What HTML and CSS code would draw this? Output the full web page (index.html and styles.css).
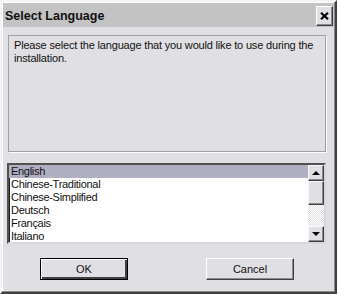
FILE: index.html
```html
<!DOCTYPE html>
<html lang="en">
<head>
    <meta charset="UTF-8">
    <title>Select Language</title>
    <link rel="stylesheet" href="styles.css">
</head>
<body>
    <div class="window">
        <div class="title-bar">
            <span class="title">Select Language</span>
            <button class="close-btn" aria-label="Close">
                <svg width="9" height="8" viewBox="0 0 9 8"><path d="M1 0.8 L8 7.2 M8 0.8 L1 7.2" stroke="#000" stroke-width="2.2" fill="none"/></svg>
            </button>
        </div>

        <div class="content">
            <div class="message">
                Please select the language that you would like to use during the installation.
            </div>

            <div class="list-box">
                <ul class="items">
                    <li class="selected">English</li>
                    <li>Chinese-Traditional</li>
                    <li>Chinese-Simplified</li>
                    <li>Deutsch</li>
                    <li>Français</li>
                    <li>Italiano</li>
                </ul>
                <div class="scrollbar">
                    <div class="sb-btn"><span class="arrow-up"></span></div>
                    <div class="sb-thumb"></div>
                    <div class="sb-track"></div>
                    <div class="sb-btn"><span class="arrow-down"></span></div>
                </div>
            </div>

            <div class="buttons">
                <button class="btn default">OK</button>
                <button class="btn">Cancel</button>
            </div>
        </div>
    </div>
</body>
</html>
```

FILE: styles.css
```css
body {
    margin: 0;
    font-family: 'Liberation Sans', Arial, sans-serif;
    background-color: #e0dfe3;
}
.window {
    width: 337px;
    height: 294px;
    box-sizing: border-box;
    background-color: #e0dfe3;
    border: 2px solid;
    border-color: #f4f4f4 #404040 #404040 #f4f4f4;
    box-shadow: inset -1px -1px #8a8a8a, inset 1px 1px #ffffff;
    display: flex;
    flex-direction: column;
}
.title-bar {
    margin: 1px 1px 0 1px;
    height: 24px;
    background-color: #c3c3c3;
    display: flex;
    align-items: center;
    justify-content: space-between;
    padding: 0 1px 0 2px;
}
.title {
    font-weight: 700;
    font-size: 12.5px;
    color: #111;
    padding-top: 1px;
}
.close-btn {
    width: 17px;
    height: 20px;
    padding: 0;
    margin-top: 1px;
    background-color: #e0dfe3;
    border: 1px solid;
    border-color: #ffffff #404040 #404040 #ffffff;
    box-shadow: inset -1px -1px #8a8a8a;
    display: flex;
    align-items: center;
    justify-content: center;
}
.content {
    padding: 8px 9px 0 6px;
}
.message {
    height: 112px;
    border: 1px solid #a0a0a0;
    box-shadow: 1px 1px 0 #fbfbfb;
    padding: 3px 5px 0 5px;
    font-size: 11px;
    letter-spacing: -0.18px;
    line-height: 13px;
    color: #111;
}
.list-box {
    margin: 11px 0 0 -1px;
    height: 81px;
    box-sizing: border-box;
    border: 2px solid;
    border-color: #505050 #d8d8d8 #d8d8d8 #505050;
    box-shadow: inset 1px 1px #202020;
    background-color: #ffffff;
    display: flex;
}
.items {
    list-style: none;
    margin: 0;
    padding: 0;
    flex: 1;
}
.items li {
    height: 13px;
    line-height: 13px;
    padding-left: 2px;
    font-size: 11px;
    letter-spacing: -0.3px;
    color: #111;
}
.items li.selected {
    background-color: #b0afc2;
}
.scrollbar {
    width: 16px;
    display: flex;
    flex-direction: column;
}
.sb-btn, .sb-thumb {
    box-sizing: border-box;
    background-color: #e0dfe3;
    border: 1px solid;
    border-color: #f8f8f8 #404040 #404040 #f8f8f8;
    box-shadow: inset -1px -1px #8a8a8a;
}
.sb-btn {
    height: 16px;
    display: flex;
    align-items: center;
    justify-content: center;
}
.sb-thumb {
    height: 24px;
}
.sb-track {
    flex: 1;
    background: repeating-conic-gradient(#ffffff 0 25%, #e0dfe3 0 50%) 0 0 / 2px 2px;
}
.arrow-up, .arrow-down {
    width: 0;
    height: 0;
    border-left: 4px solid transparent;
    border-right: 4px solid transparent;
}
.arrow-up {
    border-bottom: 4px solid #000;
}
.arrow-down {
    border-top: 4px solid #000;
}
.buttons {
    display: flex;
    gap: 78px;
    padding: 14px 0 0 32px;
}
.btn {
    width: 88px;
    height: 22px;
    box-sizing: border-box;
    font-family: 'Liberation Sans', Arial, sans-serif;
    font-size: 11px;
    color: #111;
    background-color: #e0dfe3;
    border: 1px solid;
    border-color: #ffffff #404040 #404040 #ffffff;
    box-shadow: inset -1px -1px #8a8a8a;
    padding: 0;
}
.btn.default {
    border: 1px solid #000;
    box-shadow: inset 1px 1px #ffffff, inset -2px -2px #404040;
}
```
